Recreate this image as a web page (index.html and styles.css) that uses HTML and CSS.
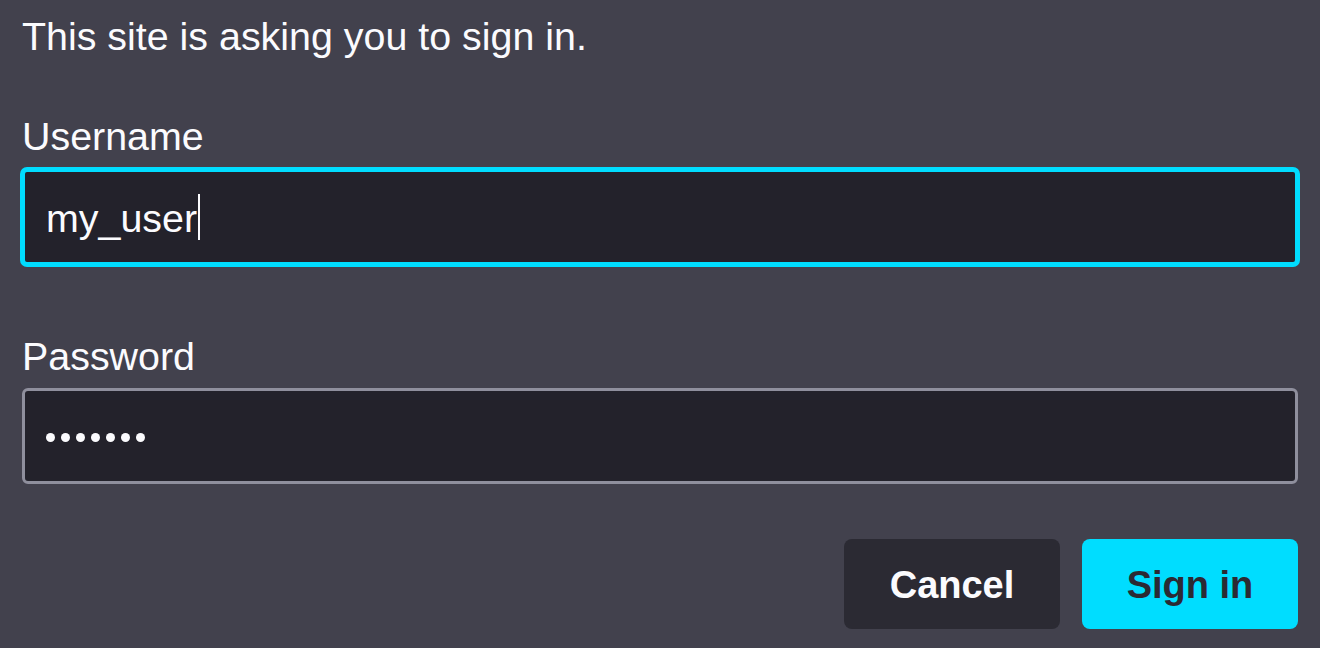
FILE: index.html
```html
<!DOCTYPE html>
<html lang="en">
<head>
<meta charset="utf-8">
<title>Sign in</title>
<link rel="stylesheet" href="styles.css">
</head>
<body>
<div class="dialog">
  <p class="message">This site is asking you to sign in.</p>
  <div class="field-group username">
    <div class="label">Username</div>
    <div class="field focused"><span class="value">my_user</span><span class="caret"></span></div>
  </div>
  <div class="field-group password">
    <div class="label">Password</div>
    <div class="field"><span class="dots"><i></i><i></i><i></i><i></i><i></i><i></i><i></i></span></div>
  </div>
  <div class="buttons">
    <button class="btn btn-secondary">Cancel</button>
    <button class="btn btn-primary">Sign in</button>
  </div>
</div>
</body>
</html>
```
FILE: styles.css
```css
html, body {
  margin: 0;
  padding: 0;
  background: #42414d;
}
body {
  width: 1320px;
  height: 648px;
  overflow: hidden;
  font-family: "Liberation Sans", Arial, sans-serif;
  color: #fbfbfe;
}
.dialog {
  padding: 12px 22px 0 22px;
  display: flex;
  flex-direction: column;
}
.message {
  margin: 0;
  font-size: 39.4px;
  line-height: 48px;
}
.label {
  font-size: 39.4px;
  line-height: 48px;
}
.username {
  margin-top: 52px;
}
.username .label {
  margin-bottom: 9px;
}
.password {
  margin-top: 67px;
}
.password .label {
  margin-bottom: 8px;
}
.field {
  box-sizing: border-box;
  height: 96px;
  border: 3px solid #8f8f9d;
  border-radius: 6px;
  background: #23222b;
  padding: 0 21px;
  display: flex;
  align-items: center;
  font-size: 39.4px;
  line-height: 48px;
}
.field.focused {
  border-color: #00ddff;
  box-shadow: 0 0 0 2px #00ddff;
  border-radius: 5px;
}
.value {
  position: relative;
  top: 1px;
}
.caret {
  display: inline-block;
  width: 2px;
  height: 46px;
  background: #fbfbfe;
  margin-left: 1px;
}
.dots {
  display: flex;
  gap: 6px;
  position: relative;
  top: 1px;
}
.dots i {
  display: block;
  width: 9px;
  height: 9px;
  border-radius: 50%;
  background: #fbfbfe;
}
.buttons {
  margin-top: 55px;
  display: flex;
  justify-content: flex-end;
  gap: 22px;
}
.btn {
  width: 216px;
  height: 90px;
  border: none;
  border-radius: 8px;
  font-family: "Liberation Sans", Arial, sans-serif;
  font-weight: bold;
  font-size: 38px;
  padding: 0;
  padding-top: 2px;
}
.btn-secondary {
  background: #2b2a33;
  color: #fbfbfe;
}
.btn-primary {
  background: #00ddff;
  color: #2b2a33;
}
```
